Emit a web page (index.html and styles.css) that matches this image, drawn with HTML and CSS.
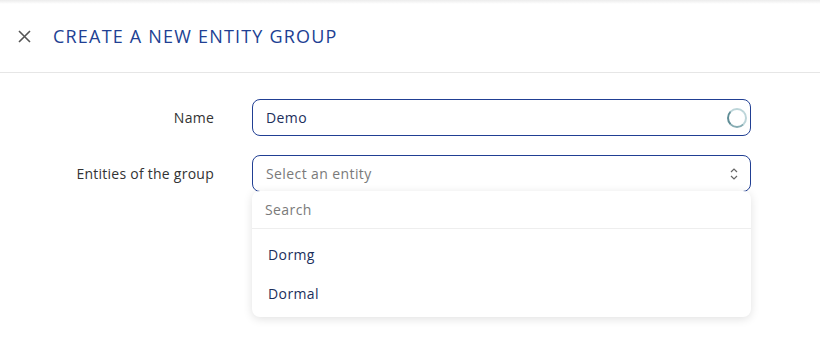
FILE: index.html
```html
<!DOCTYPE html>
<html lang="en">
<head>
    <meta charset="UTF-8">
    <title>Create a new entity group</title>
    <link rel="stylesheet" href="styles.css">
</head>
<body>
    <div class="top-shade"></div>
    <div class="header">
        <button class="close-btn" aria-label="Close">
            <svg width="13" height="13" viewBox="0 0 13 13"><path d="M1 1 L12 12 M12 1 L1 12" stroke="#555" stroke-width="1.6" fill="none"/></svg>
        </button>
        <h1>CREATE A NEW ENTITY GROUP</h1>
    </div>
    <div class="form">
        <div class="row">
            <label class="label">Name</label>
            <div class="field">
                <span class="value">Demo</span>
                <span class="spinner"></span>
            </div>
        </div>
        <div class="row">
            <label class="label">Entities of the group</label>
            <div class="field select">
                <span class="placeholder">Select an entity</span>
                <svg class="chevrons" width="10" height="14" viewBox="0 0 10 14"><path d="M2 5 L5 2 L8 5 M2 9 L5 12 L8 9" stroke="#666" stroke-width="1.2" fill="none"/></svg>
                <div class="dropdown">
                    <div class="search">Search</div>
                    <ul>
                        <li>Dormg</li>
                        <li>Dormal</li>
                    </ul>
                </div>
            </div>
        </div>
    </div>
</body>
</html>
```

FILE: styles.css
```css
:root {
    --primary: #213f93;
    --navy: #1c2f5c;
    --border: #e6e6e6;
    --muted: #7a7a7a;
}

body {
    margin: 0;
    min-height: 100vh;
    font-family: 'Open Sans', 'Noto Sans', sans-serif;
    background: white;
    color: var(--navy);
}

.top-shade {
    height: 4px;
    background: linear-gradient(#ececec, #ffffff);
}

.header {
    display: flex;
    align-items: center;
    height: 64px;
    padding: 0 0 4px 18px;
    border-bottom: 1px solid var(--border);
}

.close-btn {
    background: none;
    border: none;
    padding: 0;
    width: 13px;
    height: 13px;
    display: flex;
    cursor: pointer;
}

.header h1 {
    margin: 0 0 0 22px;
    font-size: 18px;
    font-weight: 400;
    color: var(--primary);
    letter-spacing: 1.2px;
}

.form {
    padding-top: 26px;
}

.row {
    display: flex;
    align-items: center;
    margin-bottom: 19px;
}

.label {
    width: 214px;
    text-align: right;
    font-size: 14px;
    color: #333;
    letter-spacing: 0.25px;
    margin-right: 38px;
}

.field {
    position: relative;
    width: 499px;
    height: 37px;
    box-sizing: border-box;
    border: 1px solid var(--primary);
    border-radius: 8px;
    display: flex;
    align-items: center;
    justify-content: space-between;
    padding: 0 12px 0 13px;
    font-size: 14px;
    letter-spacing: 0.4px;
}

.value {
    color: var(--navy);
}

.spinner {
    width: 16px;
    height: 16px;
    border-radius: 50%;
    border: 2px solid #bcd5d9;
    border-left-color: #5f8d96;
    border-bottom-color: #86acb3;
    margin-right: -9px;
}

.placeholder {
    color: var(--muted);
}

.chevrons {
    margin-right: -1px;
}

.dropdown {
    position: absolute;
    top: 35px;
    left: -1px;
    right: -1px;
    background: white;
    border-radius: 8px;
    box-shadow: 0 2px 10px rgba(0,0,0,0.12);
}

.search {
    height: 37px;
    line-height: 37px;
    padding-left: 13px;
    color: var(--muted);
    border-bottom: 1px solid #eeeeee;
}

.dropdown ul {
    list-style: none;
    margin: 0;
    padding: 6px 0 4px;
}

.dropdown li {
    height: 39px;
    line-height: 39px;
    padding-left: 16px;
    color: var(--navy);
}
```
